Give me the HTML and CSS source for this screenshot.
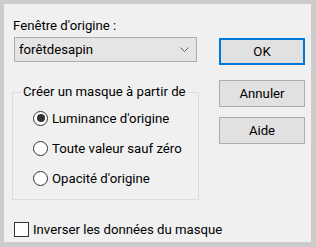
FILE: index.html
```html
<!DOCTYPE html>
<html lang="fr">
<head>
  <meta charset="UTF-8">
  <meta name="viewport" content="width=device-width, initial-scale=1.0">
  <title>Masque</title>
  <link rel="stylesheet" href="styles.css">
</head>
<body>
  <div class="dialog">
    <div class="main">
      <div class="left">
        <div class="field-label">Fenêtre d'origine :</div>
        <div class="combo">
          <span>forêtdesapin</span>
          <svg class="chevron" width="9" height="5" viewBox="0 0 9 5"><path d="M0.5 0.5 L4.5 4.5 L8.5 0.5" fill="none" stroke="#606060" stroke-width="1"/></svg>
        </div>
        <fieldset class="group">
          <legend>Créer un masque à partir de</legend>
          <label class="radio-row"><span class="radio checked"></span>Luminance d'origine</label>
          <label class="radio-row"><span class="radio"></span>Toute valeur sauf zéro</label>
          <label class="radio-row"><span class="radio"></span>Opacité d'origine</label>
        </fieldset>
      </div>
      <div class="buttons">
        <button class="button default">OK</button>
        <button class="button cancel">Annuler</button>
        <button class="button help">Aide</button>
      </div>
    </div>
    <label class="check-row"><span class="checkbox"></span>Inverser les données du masque</label>
  </div>
</body>
</html>
```
FILE: styles.css
```css
html, body {
  margin: 0;
  height: 100%;
}
body {
  font-family: Roboto, 'Noto Sans', sans-serif;
  font-size: 13.2px;
  color: #000;
  background-color: #cccccc;
  padding: 4px 5px 5px 4px;
  box-sizing: border-box;
}
.dialog {
  background-color: #f0f0f0;
  height: 100%;
  box-sizing: border-box;
  padding: 12px 0 0 8px;
  white-space: nowrap;
}
.main {
  display: flex;
  gap: 20px;
}
.left {
  width: 187px;
}
.field-label {
  line-height: 20px;
  height: 20px;
  padding-left: 1px;
}
.combo {
  margin: 1px 0 0 2px;
  width: 183px;
  height: 25px;
  box-sizing: border-box;
  border: 1px solid #adadad;
  background-color: #e5e5e5;
  display: flex;
  align-items: center;
  justify-content: space-between;
  padding: 0 7px 0 4px;
}
.chevron {
  display: block;
}
.group {
  margin: 20px 0 0 0;
  padding: 6px 0 11px 0;
  min-width: 0;
  border: 1px solid #dcdcdc;
  display: flex;
  flex-direction: column;
  gap: 10px;
}
.group legend {
  margin-left: 8px;
  padding: 0 2px;
  line-height: 20px;
}
.radio-row {
  display: flex;
  align-items: center;
  height: 20px;
  gap: 4px;
  padding-left: 20px;
}
.radio {
  width: 15px;
  height: 15px;
  box-sizing: border-box;
  border: 1px solid #333;
  border-radius: 50%;
  background-color: #fff;
  display: flex;
  align-items: center;
  justify-content: center;
}
.radio.checked::after {
  content: "";
  width: 8px;
  height: 8px;
  border-radius: 50%;
  background-color: #333;
}
.buttons {
  display: flex;
  flex-direction: column;
  padding-top: 22px;
}
.button {
  width: 86px;
  height: 27px;
  box-sizing: border-box;
  border: 1px solid #adadad;
  background-color: #e1e1e1;
  font-family: inherit;
  font-size: 13.2px;
  color: #000;
  padding: 0;
}
.button.default {
  border: 2px solid #0078d7;
}
.button.cancel {
  margin-top: 15px;
}
.button.help {
  margin-top: 10px;
}
.check-row {
  display: flex;
  align-items: center;
  height: 20px;
  margin: 19px 0 0 2px;
  gap: 4px;
}
.checkbox {
  width: 15px;
  height: 15px;
  box-sizing: border-box;
  border: 1px solid #333;
  background-color: #fff;
}
```
